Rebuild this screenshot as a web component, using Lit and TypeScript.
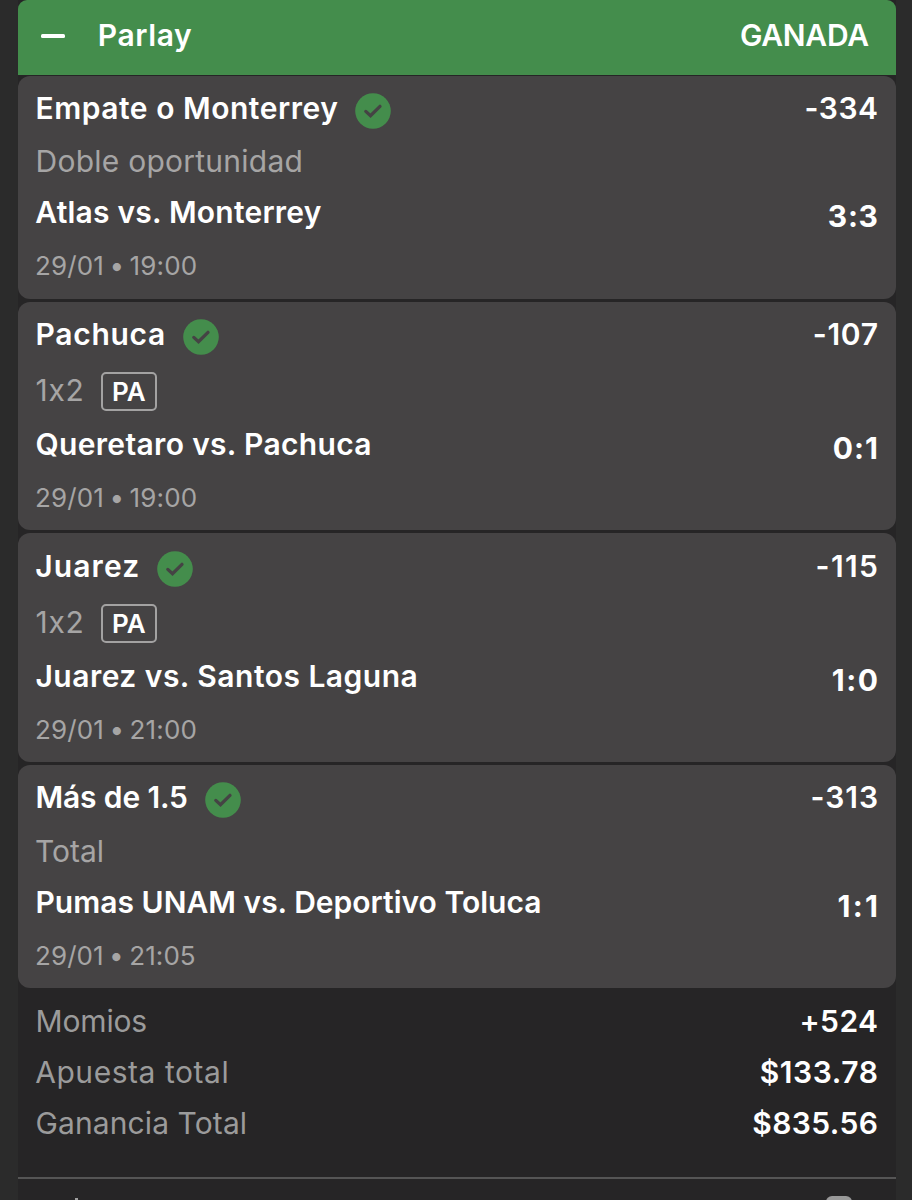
import { LitElement, html, css, nothing, svg } from "lit";
import { customElement, property } from "lit/decorators.js";
import { styleMap } from "lit/directives/style-map.js";

/** Text with its tracking and optical side offset, in pixels. */
interface Label {
  text: string;
  track: number;
  shift?: number;
}

interface Leg {
  pick: Label;
  odds: Label;
  market: Label;
  early?: boolean;
  match: Label;
  score: Label;
  date: Label;
}

const label = (text: string, track: number, shift = 0): Label => ({ text, track, shift });

const LEGS: Leg[] = [
  {
    pick: label("Empate o Monterrey", 0.52, -0.5),
    odds: label("-334", 0.5),
    market: label("Doble oportunidad", 0.25, -0.5),
    match: label("Atlas vs. Monterrey", 0.22, -0.7),
    score: label("3:3", 0.7),
    date: label("29/01 • 19:00", 0.13, -1),
  },
  {
    pick: label("Pachuca", 0.7, -0.5),
    odds: label("-107", 0.7),
    market: label("1x2", 0.7, -0.5),
    early: true,
    match: label("Queretaro vs. Pachuca", 0.33, -0.5),
    score: label("0:1", 1),
    date: label("29/01 • 19:00", 0.13, -1),
  },
  {
    pick: label("Juarez", 1.1, -0.7),
    odds: label("-115", 1.4),
    market: label("1x2", 0.7, -0.5),
    early: true,
    match: label("Juarez vs. Santos Laguna", 0.48, -0.5),
    score: label("1:0", 1.5),
    date: label("29/01 • 21:00", 0.13, -1),
  },
  {
    pick: label("Más de 1.5", -0.15, -0.5),
    odds: label("-313", 1),
    market: label("Total", 0, -1),
    match: label("Pumas UNAM vs. Deportivo Toluca", 0.01, -0.5),
    score: label("1:1", 2.3),
    date: label("29/01 • 21:05", 0.08, -1),
  },
];

const TOTALS: [Label, Label][] = [
  [label("Momios", -0.15, -0.5), label("+524", 0.4)],
  [label("Apuesta total", 0.55, -0.8), label("$133.78", 0.6)],
  [label("Ganancia Total", 0.1, -0.5), label("$835.56", 0.4)],
];

const put = (l: Label, name: string) => html`<span
  class=${name}
  style=${styleMap({
    letterSpacing: `${l.track}px`,
    marginRight: `${-l.track}px`,
    marginLeft: `${l.shift ?? 0}px`,
  })}
>${l.text}</span>`;

const check = svg`
  <circle cx="18" cy="18" r="17.8" fill="#448d4c"></circle>
  <path d="M10.8 18.4 L15.5 22.7 L25 13.3" fill="none" stroke="#454344"
    stroke-width="3.3" stroke-linecap="round" stroke-linejoin="miter"></path>`;

@customElement("bet-leg")
export class BetLeg extends LitElement {
  @property({ attribute: false }) leg!: Leg;

  static styles = css`
    :host {
      display: block;
      box-sizing: border-box;
      padding: 14px 18px;
      border-radius: 12px;
      background: #454344;
      color: #fff;
      font-size: 30px;
      line-height: 36px;
      font-weight: 600;
      white-space: nowrap;
    }
    .row {
      display: flex;
      height: 36px;
      justify-content: space-between;
    }
    .lead {
      display: flex;
    }
    .check {
      width: 36px;
      height: 36px;
      margin: 3px 0 0 17.5px;
    }
    .market {
      display: flex;
      align-items: center;
      gap: 17px;
      height: 36px;
      margin-top: calc(17px + var(--market-drop, 0px));
      color: #a6a5a5;
      font-weight: 400;
    }
    .market.early {
      height: 39px;
      margin-top: 20px;
    }
    .early .kind {
      padding-bottom: 3px;
    }
    .tag {
      box-sizing: border-box;
      height: 39px;
      width: 56px;
      border: 2px solid #a3a2a2;
      border-radius: 5px;
      color: #fff;
      font-size: 26px;
      line-height: 35px;
      font-weight: 600;
      text-align: center;
    }
    .match {
      margin-top: 15px;
    }
    .score {
      padding-top: 4px;
      font-weight: 700;
    }
    .when {
      margin-top: 18px;
      height: 36px;
      color: #a6a5a5;
      font-size: 26px;
      font-weight: 400;
      word-spacing: -2px;
    }
  `;

  render() {
    const l = this.leg;
    return html`
      <div class="row">
        <div class="lead">
          ${put(l.pick, "pick")}<svg class="check" viewBox="0 0 36 36">${check}</svg>
        </div>
        ${put(l.odds, "odds")}
      </div>
      <div class="market ${l.early ? "early" : ""}">
        ${put(l.market, "kind")}${l.early ? html`<span class="tag">PA</span>` : nothing}
      </div>
      <div class="row match">${put(l.match, "teams")}${put(l.score, "score")}</div>
      <div class="when">${put(l.date, "date")}</div>
    `;
  }
}

@customElement("app-root")
export class AppRoot extends LitElement {
  static styles = css`
    :host {
      display: block;
      box-sizing: border-box;
      height: 1200px;
      padding: 0 16px 0 18px;
      overflow: hidden;
      background: #2b2b2b;
      font-family: Inter, Roboto, "Liberation Sans", sans-serif;
      font-feature-settings: "calt" 0;
      color: #fff;
    }
    .slip {
      display: flex;
      flex-direction: column;
      height: 1200px;
      background: #262526;
    }
    .head {
      display: flex;
      flex: none;
      align-items: center;
      box-sizing: border-box;
      height: 75px;
      padding: 0 27px 5px 23px;
      border-radius: 9px 9px 0 0;
      background: #448d4c;
      font-size: 30px;
      line-height: 36px;
      font-weight: 600;
    }
    .minus {
      width: 24px;
      height: 4px;
      margin: 2px 33px 0 0;
      border-radius: 1.5px;
      background: #fff;
    }
    .state {
      margin-left: auto;
      display: flex;
    }
    .legs {
      display: flex;
      flex: none;
      flex-direction: column;
      gap: 3px;
      margin-top: 1px;
    }
    bet-leg:first-child {
      padding-bottom: 15px;
    }
    bet-leg:nth-child(3) {
      padding-top: 15px;
    }
    bet-leg:last-child {
      --market-drop: 1px;
    }
    .totals {
      display: flex;
      flex: none;
      flex-direction: column;
      gap: 15px;
      padding: 15px 18px 36px;
      font-size: 30px;
      line-height: 36px;
      font-weight: 600;
      white-space: nowrap;
    }
    .total {
      display: flex;
      justify-content: space-between;
    }
    .name {
      color: #9b9b9b;
      font-weight: 400;
    }
    .foot {
      display: flex;
      flex: 1;
      min-height: 0;
      justify-content: space-between;
      border-top: 2px solid #555;
      overflow: hidden;
    }
    .accent {
      width: 3px;
      height: 6px;
      margin: 19px 0 0 57px;
      background: #a0a0a0;
    }
    .copy {
      width: 26px;
      height: 26px;
      margin: 17px 44px 0 0;
      border-radius: 6px;
      background: #999;
    }
  `;

  render() {
    return html`
      <div class="slip">
        <div class="head">
          <span class="minus"></span>
          ${put(label("Parlay", 0.6, -0.3), "title")}
          <div class="state">${put(label("GANADA", -0.25), "result")}</div>
        </div>
        <div class="legs">${LEGS.map((leg) => html`<bet-leg .leg=${leg}></bet-leg>`)}</div>
        <div class="totals">
          ${TOTALS.map(
            ([name, value]) => html`<div class="total">${put(name, "name")}${put(value, "value")}</div>`
          )}
        </div>
        <div class="foot"><span class="accent"></span><span class="copy"></span></div>
      </div>
    `;
  }
}
